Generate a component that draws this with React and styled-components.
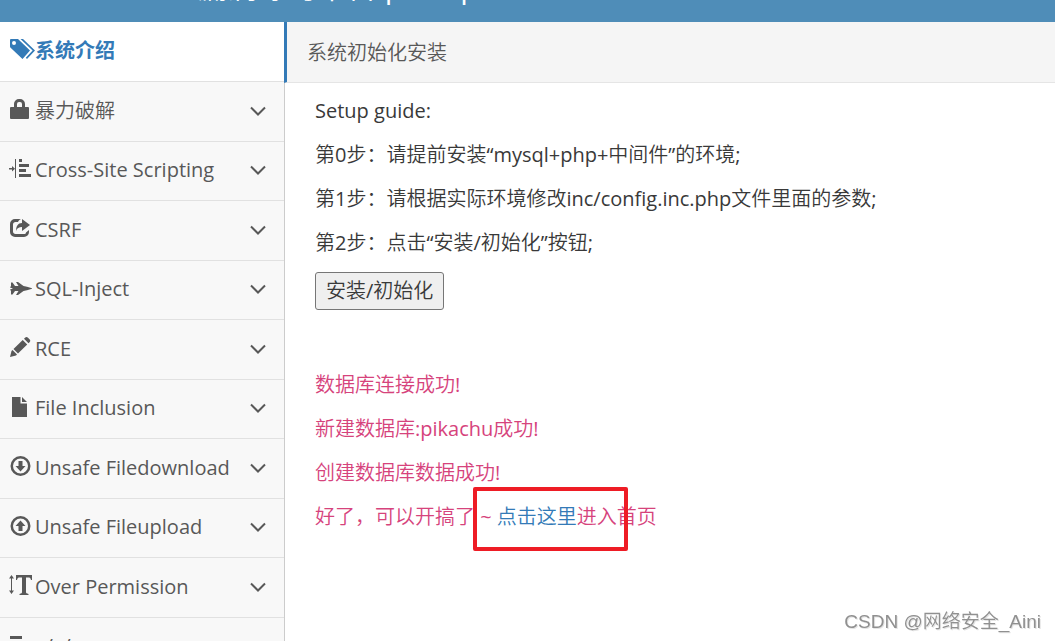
import React from 'react';
import styled, { createGlobalStyle } from 'styled-components';

const colors = {
  navbar: '#4f8db8',
  primary: '#337ab7',
  text: '#393939',
  muted: '#585858',
  border: '#e1e1e1',
  notice: '#d6437c',
  mark: '#ee1c25',
};

const GlobalStyle = createGlobalStyle`
  * {
    box-sizing: border-box;
  }

  body {
    margin: 0;
    height: 100vh;
    overflow: hidden;
    background: #fff;
    color: ${colors.text};
    font-family: 'Open Sans', 'Noto Sans CJK SC DemiLight', 'Noto Sans CJK SC', sans-serif;
    font-size: 20px;
    line-height: 30px;
  }
`;

const Page = styled.div`
  height: 100vh;
  display: flex;
  flex-direction: column;
`;

const Navbar = styled.header`
  flex: none;
  height: 22px;
  padding-left: 80px;
  display: flex;
  align-items: flex-end;
  overflow: hidden;
  background: ${colors.navbar};
`;

const Brand = styled.a`
  margin-bottom: 15px;
  color: #fff;
  font-size: 30px;
  line-height: 40px;
  text-decoration: none;
  white-space: nowrap;
`;

const Body = styled.div`
  flex: 1;
  min-height: 0;
  display: flex;
`;

const Sidebar = styled.nav`
  flex: none;
  width: 285px;
  overflow: hidden;
  background: #f8f8f8;
  border-right: 1px solid #ccc;
`;

const Menu = styled.ul`
  margin: 0;
  padding: 0;
  list-style: none;
`;

const MenuItem = styled.li`
  height: 59px;
  border-bottom: 1px solid ${colors.border};

  &:first-child {
    height: 60px;
  }

  &:nth-child(even) {
    height: 60px;
  }
`;

const MenuLink = styled.a`
  height: 100%;
  padding: 0 17px 2px 10px;
  display: flex;
  align-items: center;
  background: ${({ $active }) => ($active ? '#fff' : 'transparent')};
  color: ${({ $active }) => ($active ? colors.primary : colors.muted)};
  font-family: ${({ $active }) => ($active ? "'Open Sans', 'Noto Sans CJK SC', sans-serif" : 'inherit')};
  font-weight: ${({ $active }) => ($active ? 'bold' : 'inherit')};
  text-decoration: none;
  white-space: nowrap;
`;

const MenuText = styled.span`
  flex: 1;
`;

const MenuIcon = styled.svg`
  flex: none;
  width: 25px;
  height: 20px;
  margin-bottom: 3px;
  overflow: visible;
  fill: currentColor;
`;

const Chevron = styled.svg`
  flex: none;
  width: 18px;
  height: 12px;
  fill: none;
  stroke: currentColor;
  stroke-width: 2;
`;

const Main = styled.main`
  flex: 1;
  min-width: 0;
`;

const Breadcrumbs = styled.div`
  height: 61px;
  margin-left: -1px;
  padding: 2px 0 0 20px;
  display: flex;
  align-items: center;
  background: #f5f5f5;
  border-bottom: 1px solid #e5e5e5;
  border-left: 3px solid ${colors.primary};
  color: ${colors.muted};
`;

const Content = styled.div`
  padding: 13px 30px;
`;

const Step = styled.p`
  margin: 0 0 14px;
`;

const InstallButton = styled.button`
  height: 38px;
  margin: 0 0 60px;
  padding: 0 10px;
  display: block;
  background: #efefef;
  border: 1px solid #767676;
  border-radius: 3px;
  color: ${colors.text};
  font: inherit;
`;

const Notice = styled.p`
  margin: 0 0 14px;
  color: ${colors.notice};
`;

const NoticeLink = styled.a`
  color: ${colors.primary};
  text-decoration: none;
`;

const Marked = styled.span`
  position: relative;
`;

const MarkBox = styled.span`
  position: absolute;
  top: -16px;
  left: -24px;
  width: 155px;
  height: 64px;
  border: 4px solid ${colors.mark};
  border-radius: 2px;
`;

const Watermark = styled.div`
  position: fixed;
  right: 14px;
  bottom: 4px;
  color: #909090;
  font-family: 'Liberation Sans', 'Noto Sans CJK SC DemiLight', 'Noto Sans CJK SC', sans-serif;
  font-size: 19px;
  text-shadow: 1px 1px 0 #e4e4e4;
`;

const icons = {
  tags: (
    <>
      <path fillRule="evenodd" d="M0 1.2C0 .5.5 0 1.2 0H8l12 11.500-7.500 8.500L.6 8.800A2 2 0 0 1 0 7.500ZM4 2a2 2 0 1 0 0 4 2 2 0 0 0 0-4Z" />
      <path d="M10.500 0H13l12 11.500-8 8.500-1.200-1.200 6.800-7.300Z" />
    </>
  ),
  lock: <path d="M4 8V5a5 5 0 0 1 5-5h1a5 5 0 0 1 5 5v3h3a1 1 0 0 1 1 1v10a1 1 0 0 1-1 1H1a1 1 0 0 1-1-1V9a1 1 0 0 1 1-1Zm3 0h5V5a2 2 0 0 0-2-2H9a2 2 0 0 0-2 2Z" />,
  align: <path d="M5 0h1v19H5ZM-1 9h3V7l3 2.8-3 2.7v-2h-3ZM9 0h3v3H9Zm0 5h10v3H9Zm0 5h7v3H9Zm0 5h12v3H9Z" />,
  share: (
    <>
      <path d="M11 1H5a5 5 0 0 0-5 5v8a5 5 0 0 0 5 5h9a5 5 0 0 0 5-5v-2l-3 2.500c0 1-1 1.500-2 1.500H5.500C4 16 3 15 3 13.500v-7C3 5 4 4 5.500 4H8c.5-1.500 1.500-2.500 3-3Z" />
      <path d="M12 1l8 6-8 6V9C9 9 7 10 6 13c0-5 2-8 6-8Z" />
    </>
  ),
  plane: <path d="M1 4.500h1.500L5 8h3.500L6 4h2l5.500 4 3.500.7 5 1.600v.4l-5 1.600-3.500.7L8 17H6l2.500-4H5l-2.500 3.500H1v-3.500l-1-1.500 3-1L0 9.500 1 8Z" />,
  pencil: <path d="M0 20l1.500-6 1-1 4.500 4.500-1 1Zm3.500-8L12.700 3l4.500 4.500L8 16.500ZM14 1.700l1-1c1-1 2-1 3 0l1.500 1.500c1 1 1 2 0 3l-1 1Z" />,
  file: <path d="M2 0h8.500v6.500H17V20H2ZM12 0l5 5h-5Z" />,
  download: (
    <>
      <path fillRule="evenodd" d="M10.500 0a10 10 0 1 0 0 20 10 10 0 0 0 0-20Zm0 2.500a7.500 7.500 0 1 1 0 15 7.500 7.500 0 0 1 0-15Z" />
      <path d="M8.500 5h4v5h3l-5 5.500L5.500 10h3Z" />
    </>
  ),
  upload: (
    <>
      <path fillRule="evenodd" d="M10.500 0a10 10 0 1 0 0 20 10 10 0 0 0 0-20Zm0 2.500a7.500 7.500 0 1 1 0 15 7.500 7.500 0 0 1 0-15Z" />
      <path d="M8.500 15h4v-5h3l-5-5.500L5.500 10h3Z" />
    </>
  ),
  textHeight: (
    <>
      <path d="M1.500 0L4 3.500H2v12h2L1.500 19-1 15.500h2v-12h-2Z" />
      <path d="M6 0h16v5h-1c-.5-2-1-2.500-3-2.500h-2V17c0 1 .5 1.500 2.500 2v1h-9v-1c2-.5 2.500-1 2.500-2V2.500h-2c-2 0-2.500.5-3 2.500H6Z" />
    </>
  ),
  alignLeft: <path d="M0 1h12v3H0Zm0 5h18v3H0Zm0 5h10v3H0Zm0 5h20v3H0Z" />,
};

const menu = [
  { icon: 'tags', text: '系统介绍', active: true },
  { icon: 'lock', text: '暴力破解' },
  { icon: 'align', text: 'Cross-Site Scripting' },
  { icon: 'share', text: 'CSRF' },
  { icon: 'plane', text: 'SQL-Inject' },
  { icon: 'pencil', text: 'RCE' },
  { icon: 'file', text: 'File Inclusion' },
  { icon: 'download', text: 'Unsafe Filedownload' },
  { icon: 'upload', text: 'Unsafe Fileupload' },
  { icon: 'textHeight', text: 'Over Permission' },
  { icon: 'alignLeft', text: '../../' },
];

const steps = [
  'Setup guide:',
  '第0步：请提前安装“mysql+php+中间件”的环境;',
  '第1步：请根据实际环境修改inc/config.inc.php文件里面的参数;',
  '第2步：点击“安装/初始化”按钮;',
];

const notices = ['数据库连接成功!', '新建数据库:pikachu成功!', '创建数据库数据成功!'];

const App = () => (
  <Page lang="zh-CN">
    <GlobalStyle />
    <Navbar>
      <Brand href="#home">Pikachu 漏洞练习平台 pika~pika~</Brand>
    </Navbar>
    <Body>
      <Sidebar>
        <Menu>
          {menu.map(({ icon, text, active }) => (
            <MenuItem key={text}>
              <MenuLink href="#menu" $active={active}>
                <MenuIcon viewBox="0 0 25 20" aria-hidden="true">{icons[icon]}</MenuIcon>
                <MenuText>{text}</MenuText>
                {!active && (
                  <Chevron viewBox="0 0 18 12" aria-hidden="true">
                    <path d="M2 2.500l7 7 7-7" />
                  </Chevron>
                )}
              </MenuLink>
            </MenuItem>
          ))}
        </Menu>
      </Sidebar>
      <Main>
        <Breadcrumbs>系统初始化安装</Breadcrumbs>
        <Content>
          {steps.map((step) => <Step key={step}>{step}</Step>)}
          <InstallButton type="button">安装/初始化</InstallButton>
          {notices.map((notice) => <Notice key={notice}>{notice}</Notice>)}
          <Notice>
            {'好了，可以开搞了 ~ '}
            <Marked>
              <NoticeLink href="#index">点击这里</NoticeLink>
              <MarkBox />
            </Marked>
            进入首页
          </Notice>
        </Content>
      </Main>
    </Body>
    <Watermark>CSDN @网络安全_Aini</Watermark>
  </Page>
);

export default App;
